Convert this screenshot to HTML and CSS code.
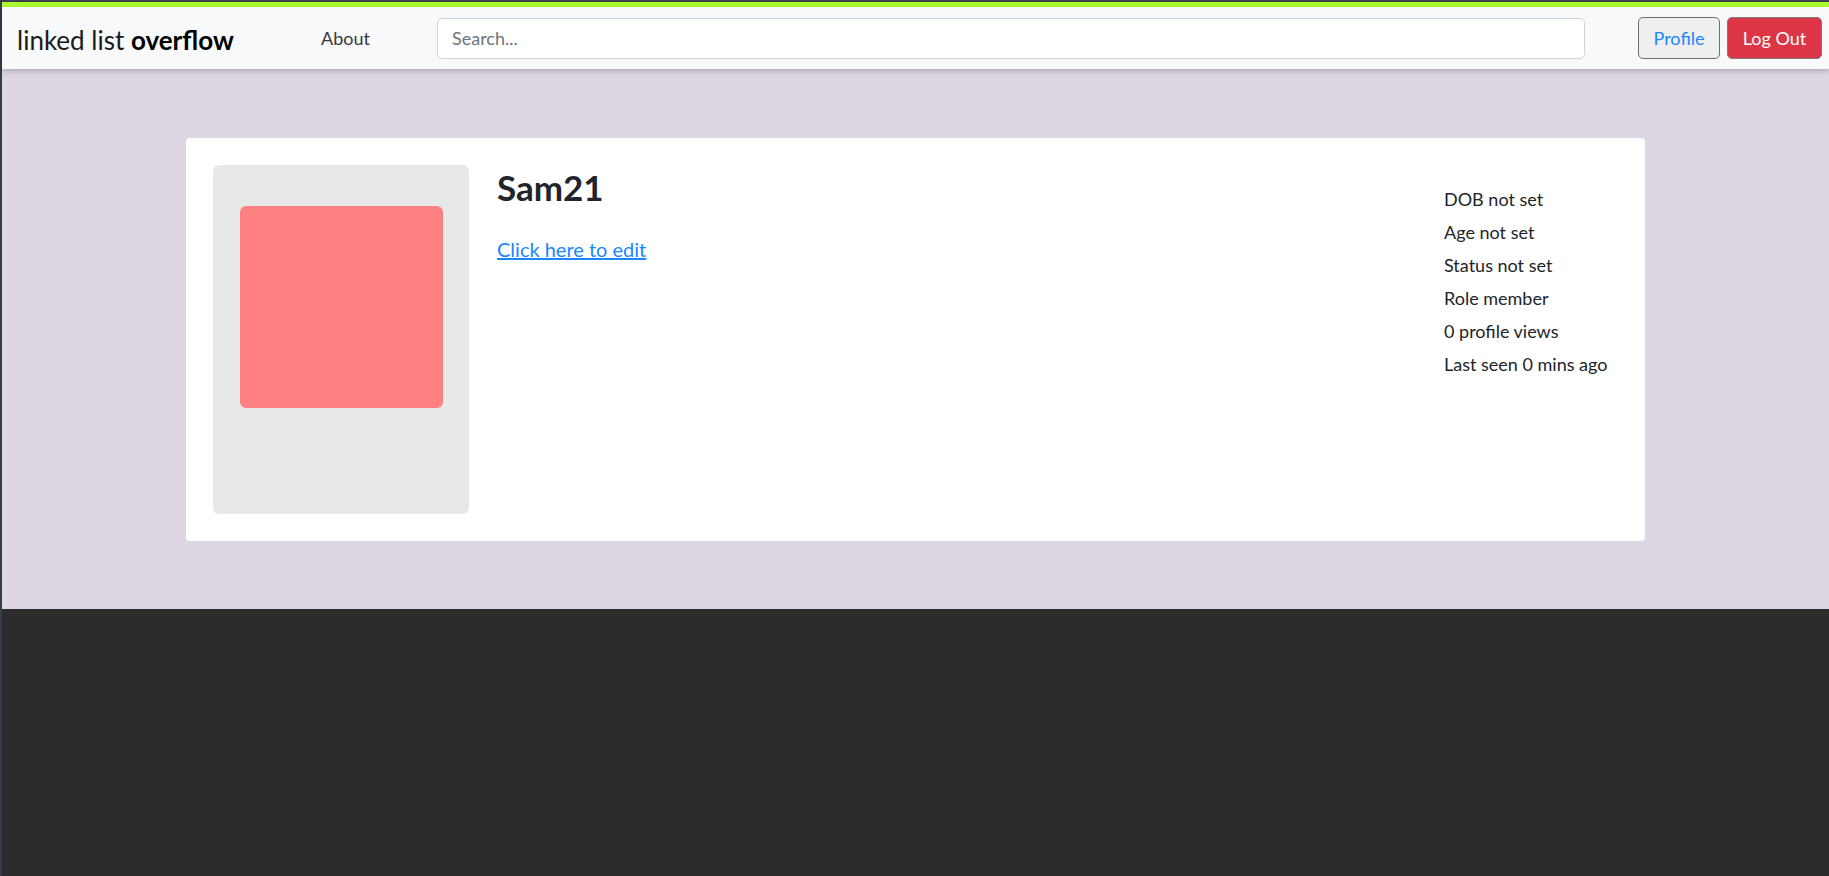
FILE: index.html
```html
<!DOCTYPE html>
<html lang="en">
<head>
<meta charset="utf-8">
<title>linked list overflow</title>
<link rel="stylesheet" href="styles.css">
</head>
<body>
<div class="frame">
  <div class="accent"></div>
  <nav class="navbar">
    <a class="brand" href="#">linked list <b>overflow</b></a>
    <a class="nav-link" href="#">About</a>
    <input class="search" type="text" placeholder="Search...">
    <button class="btn btn-profile" type="button">Profile</button>
    <button class="btn btn-logout" type="button">Log Out</button>
  </nav>
  <main class="page">
    <section class="card">
      <div class="avatar-box"><div class="avatar"></div></div>
      <div class="info">
        <h2 class="name">Sam21</h2>
        <a class="edit" href="#">Click here to edit</a>
      </div>
      <ul class="stats">
        <li>DOB not set</li>
        <li>Age not set</li>
        <li>Status not set</li>
        <li>Role member</li>
        <li>0 profile views</li>
        <li>Last seen 0 mins ago</li>
      </ul>
    </section>
  </main>
  <footer class="footer"></footer>
</div>
</body>
</html>
```
FILE: styles.css
```css
html, body {
  margin: 0;
  padding: 0;
  height: 100%;
}
body {
  background: #2c2c2c;
  font-family: Lato, "Open Sans", sans-serif;
  font-size: 18px;
  color: #212529;
}
.frame {
  min-height: 100%;
  border-left: 2px solid #363b46;
  border-top: 2px solid #3c3f50;
  box-sizing: border-box;
  display: flex;
  flex-direction: column;
}
.accent {
  height: 5px;
  background: #adff2f;
}
.navbar {
  height: 62px;
  background: #f8f9fa;
  display: flex;
  align-items: center;
  padding: 0 7px 0 15px;
  box-shadow: 0 2px 6px rgba(0, 0, 0, 0.22);
  position: relative;
  z-index: 1;
}
.brand {
  width: 304px;
  flex: none;
  font-size: 26px;
  color: #1a1a1a;
  text-decoration: none;
  margin-top: 4px;
}
.brand b {
  font-weight: 700;
  color: #000;
}
.nav-link {
  width: 116px;
  flex: none;
  color: #3a3a3a;
  text-decoration: none;
  font-size: 18px;
}
.search {
  flex: 1;
  height: 41px;
  box-sizing: border-box;
  margin-right: 53px;
  border: 1px solid #ced4da;
  border-radius: 5px;
  background: #fff;
  padding: 0 14px;
  font-family: inherit;
  font-size: 18px;
  color: #495057;
}
.search::placeholder {
  color: #6c757d;
}
.btn {
  height: 42px;
  box-sizing: border-box;
  border-radius: 5px;
  font-family: inherit;
  font-size: 18px;
  padding: 0;
  flex: none;
}
.btn-profile {
  width: 82px;
  background: #efefef;
  border: 1px solid #6e6e6e;
  color: #1a86ff;
}
.btn-logout {
  width: 95px;
  margin-left: 7px;
  background: #dc3545;
  border: 1px solid #7a7a7a;
  color: #fff;
}
.page {
  background: #ded6e3;
  padding: 69px 0 68px;
  display: flex;
  justify-content: center;
}
.card {
  width: 1459px;
  box-sizing: border-box;
  background: #fff;
  border-radius: 4px;
  padding: 27px;
  display: flex;
  align-items: flex-start;
}
.avatar-box {
  width: 256px;
  height: 349px;
  box-sizing: border-box;
  flex: none;
  background: #e8e8e8;
  border-radius: 6px;
  padding: 41px 0 0 27px;
}
.avatar {
  width: 203px;
  height: 202px;
  background: #ff8080;
  border-radius: 6px;
}
.info {
  flex: 1;
  margin-left: 28px;
}
.name {
  margin: 1px 0 28px;
  font-size: 35px;
  font-weight: 700;
  line-height: 1.2;
  color: #212529;
}
.edit {
  color: #1a86ff;
  text-decoration: underline;
  font-size: 20px;
  line-height: 27px;
}
.stats {
  width: 174px;
  flex: none;
  list-style: none;
  margin: 0;
  padding: 18px 0 0;
}
.stats li {
  line-height: 33px;
  color: #212529;
  white-space: nowrap;
}
.footer {
  flex: 1;
  background: #2c2c2c;
}
```
